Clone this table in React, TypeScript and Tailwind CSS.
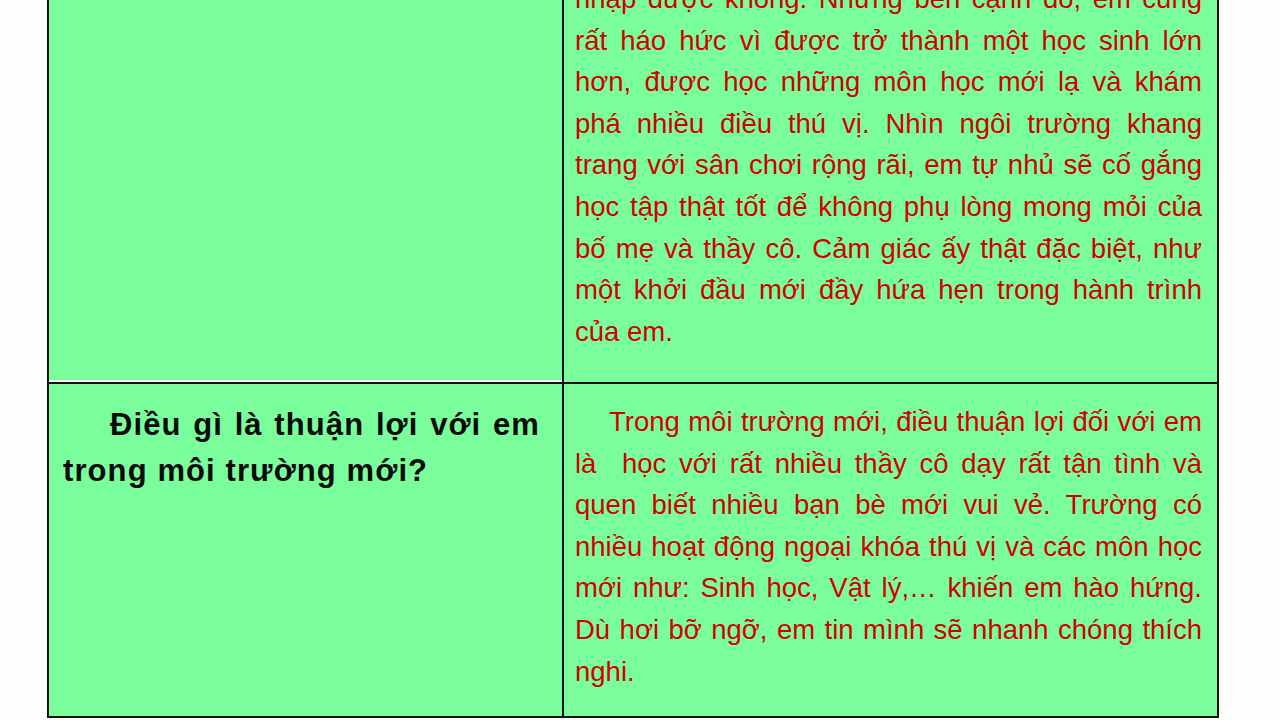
const topLines = [
  'nhập được không. Nhưng bên cạnh đó, em cũng',
  'rất háo hức vì được trở thành một học sinh lớn',
  'hơn, được học những môn học mới lạ và khám',
  'phá nhiều điều thú vị. Nhìn ngôi trường khang',
  'trang với sân chơi rộng rãi, em tự nhủ sẽ cố gắng',
  'học tập thật tốt để không phụ lòng mong mỏi của',
  'bố mẹ và thầy cô. Cảm giác ấy thật đặc biệt, như',
  'một khởi đầu mới đầy hứa hẹn trong hành trình',
  'của em.',
]

const answerLines = [
  'Trong môi trường mới, điều thuận lợi đối với em',
  'là  học với rất nhiều thầy cô dạy rất tận tình và',
  'quen biết nhiều bạn bè mới vui vẻ. Trường có',
  'nhiều hoạt động ngoại khóa thú vị và các môn học',
  'mới như: Sinh học, Vật lý,… khiến em hào hứng.',
  'Dù hơi bỡ ngỡ, em tin mình sẽ nhanh chóng thích',
  'nghi.',
]

function RedText({ lines, indentFirst }: { lines: string[]; indentFirst?: boolean }) {
  return (
    <div className="text-[27.5px] leading-[41.6px] text-[#d20000] whitespace-pre">
      {lines.map((line, i) => {
        const last = i === lines.length - 1
        return (
          <div
            key={i}
            className={`${last ? 'text-left' : 'text-justify [text-align-last:justify]'} ${
              i === 0 && indentFirst ? 'pl-[34px]' : ''
            }`}
          >
            {line}
          </div>
        )
      })}
    </div>
  )
}

export default function App() {
  return (
    <div
      className="w-[1280px] h-[720px] overflow-hidden bg-[#fdfdfd]"
      style={{ fontFamily: '"Liberation Sans", Arial, sans-serif' }}
    >
      <div className="ml-[47px] w-[1172px] -mt-[38px] border-x-2 border-[#111] bg-[#79fe9b]">
        {/* first row, cut off at the top */}
        <div className="flex h-[420px]">
          <div className="w-[513px] border-b-2 border-white" />
          <div className="w-[2px] bg-[#111]" />
          <div className="flex-1 pt-[16px] pl-[11px] pr-[15px]">
            <RedText lines={topLines} />
          </div>
        </div>

        {/* second row */}
        <div className="flex h-[336px] border-y-2 border-[#111]">
          <div className="w-[513px] pt-[18px] pl-[14px] pr-[22px] text-[31px] tracking-[1.1px] leading-[46px] font-bold text-[#0a0a0a]">
            <div className="pl-[47px] text-justify [text-align-last:justify]">Điều gì là thuận lợi với em</div>
            <div>trong môi trường mới?</div>
          </div>
          <div className="w-[2px] bg-[#111]" />
          <div className="flex-1 pt-[17px] pl-[11px] pr-[15px]">
            <RedText lines={answerLines} indentFirst />
          </div>
        </div>
      </div>
    </div>
  )
}
